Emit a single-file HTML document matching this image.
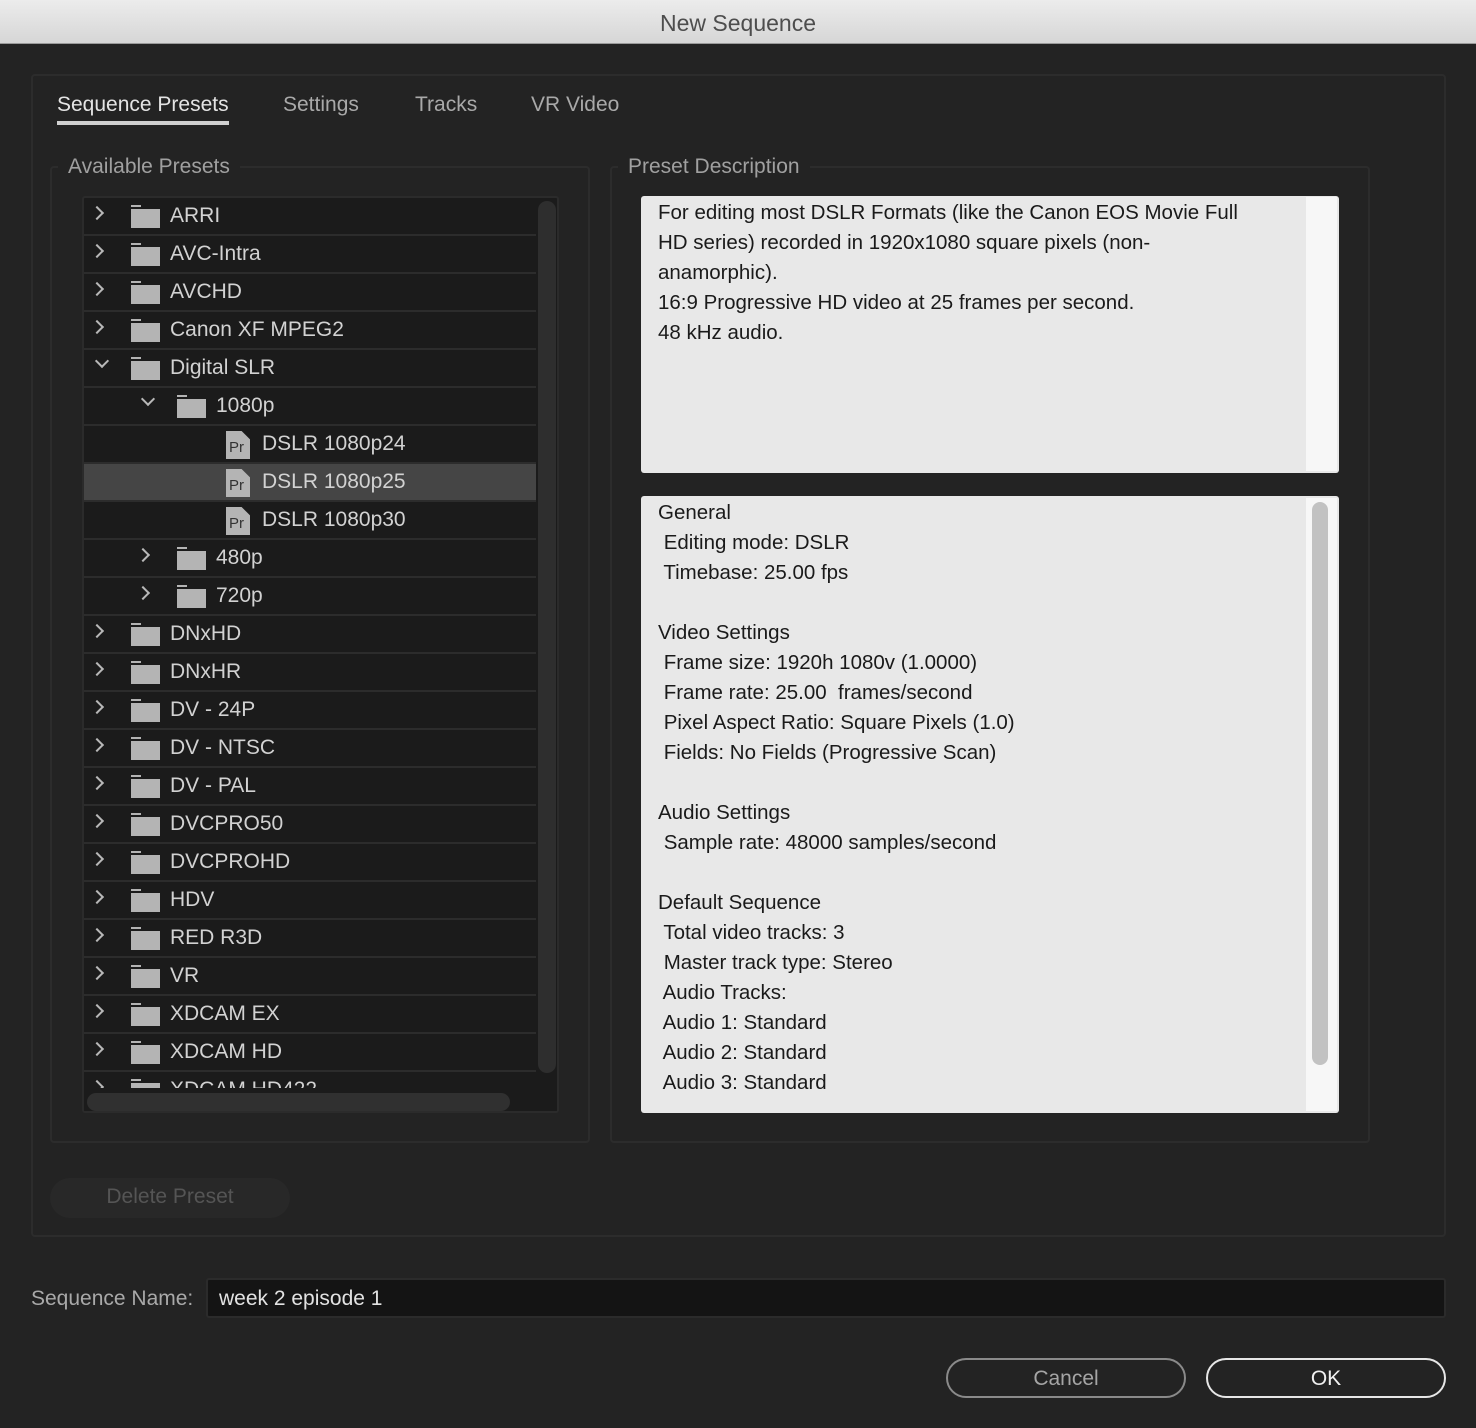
<!DOCTYPE html>
<html><head><meta charset="utf-8"><style>
*{margin:0;padding:0;box-sizing:border-box}
body{width:1476px;height:1428px;background:#232323;font-family:"Liberation Sans",sans-serif;position:relative;overflow:hidden;color:#c8c8c8}
.abs{position:absolute}
#title{left:0;top:0;width:1476px;height:44px;background:linear-gradient(#ececec,#d6d6d6);border-bottom:1px solid #9a9a9a;text-align:center;font-size:23px;line-height:46px;color:#4d4d4d}
.box{border:2px solid #2c2c2c;border-radius:4px}
.tab{top:93px;font-size:21px;color:#a9a9a9}
.legend{font-size:21px;color:#a0a0a0;background:#232323;padding:0 10px}
#tree{left:82px;top:196px;width:477px;height:917px;background:#1b1b1b;border:2px solid #2b2b2b;border-radius:3px;overflow:hidden}
.row{position:absolute;left:-2px;width:454px;height:38px;border-bottom:2px solid #2c2c2c;font-size:21px;color:#d2d2d2;line-height:35px}
.row.sel{background:#454545}
.chev{position:absolute;top:10px;width:10px;height:10px;border-right:2px solid #b8b8b8;border-bottom:2px solid #b8b8b8}
.fold{position:absolute;top:11px;width:29px;height:19px;background:#b4b4b4}
.fold:before{content:"";position:absolute;left:0;top:-4px;width:10px;height:2px;background:#b4b4b4}
.pr{position:absolute;top:5px;width:24px;height:28px;background:#b4b4b4;clip-path:polygon(0 0,65% 0,100% 30%,100% 100%,0 100%);font-style:normal}
.pr span{position:absolute;left:3px;top:8px;font-size:15px;line-height:18px;color:#333}
.txt{position:absolute;top:0}
.desc{background:#e8e8e8;border-radius:3px;color:#1a1a1a;font-size:20.5px;line-height:30px;padding:2px 17px}
.btn{border-radius:20px;text-align:center;font-size:21px;line-height:37px}
</style></head><body>
<div id="title" class="abs">New Sequence</div>
<div class="abs box" style="left:31px;top:74px;width:1415px;height:1163px"></div>
<div class="abs tab" style="left:57px;color:#e4e4e4">Sequence Presets</div>
<div class="abs" style="left:57px;top:121px;width:172px;height:4px;background:#d0d0d0"></div>
<div class="abs tab" style="left:283px">Settings</div>
<div class="abs tab" style="left:415px">Tracks</div>
<div class="abs tab" style="left:531px">VR Video</div>

<div class="abs box" style="left:50px;top:166px;width:540px;height:977px"></div>
<div class="abs legend" style="left:58px;top:155px">Available Presets</div>
<div class="abs box" style="left:610px;top:166px;width:760px;height:977px"></div>
<div class="abs legend" style="left:618px;top:155px">Preset Description</div>

<div id="tree" class="abs">
<div class="row" style="top:0"><i class="chev" style="left:10px;transform:rotate(-45deg)"></i><i class="fold" style="left:49px"></i><span class="txt" style="left:88px">ARRI</span></div>
<div class="row" style="top:38px"><i class="chev" style="left:10px;transform:rotate(-45deg)"></i><i class="fold" style="left:49px"></i><span class="txt" style="left:88px">AVC-Intra</span></div>
<div class="row" style="top:76px"><i class="chev" style="left:10px;transform:rotate(-45deg)"></i><i class="fold" style="left:49px"></i><span class="txt" style="left:88px">AVCHD</span></div>
<div class="row" style="top:114px"><i class="chev" style="left:10px;transform:rotate(-45deg)"></i><i class="fold" style="left:49px"></i><span class="txt" style="left:88px">Canon XF MPEG2</span></div>
<div class="row" style="top:152px"><i class="chev" style="left:15px;top:6px;transform:rotate(45deg)"></i><i class="fold" style="left:49px"></i><span class="txt" style="left:88px">Digital SLR</span></div>
<div class="row" style="top:190px"><i class="chev" style="left:61px;top:6px;transform:rotate(45deg)"></i><i class="fold" style="left:95px"></i><span class="txt" style="left:134px">1080p</span></div>
<div class="row" style="top:228px"><i class="pr" style="left:144px"><span>Pr</span></i><span class="txt" style="left:180px">DSLR 1080p24</span></div>
<div class="row sel" style="top:266px"><i class="pr" style="left:144px"><span>Pr</span></i><span class="txt" style="left:180px">DSLR 1080p25</span></div>
<div class="row" style="top:304px"><i class="pr" style="left:144px"><span>Pr</span></i><span class="txt" style="left:180px">DSLR 1080p30</span></div>
<div class="row" style="top:342px"><i class="chev" style="left:56px;transform:rotate(-45deg)"></i><i class="fold" style="left:95px"></i><span class="txt" style="left:134px">480p</span></div>
<div class="row" style="top:380px"><i class="chev" style="left:56px;transform:rotate(-45deg)"></i><i class="fold" style="left:95px"></i><span class="txt" style="left:134px">720p</span></div>
<div class="row" style="top:418px"><i class="chev" style="left:10px;transform:rotate(-45deg)"></i><i class="fold" style="left:49px"></i><span class="txt" style="left:88px">DNxHD</span></div>
<div class="row" style="top:456px"><i class="chev" style="left:10px;transform:rotate(-45deg)"></i><i class="fold" style="left:49px"></i><span class="txt" style="left:88px">DNxHR</span></div>
<div class="row" style="top:494px"><i class="chev" style="left:10px;transform:rotate(-45deg)"></i><i class="fold" style="left:49px"></i><span class="txt" style="left:88px">DV - 24P</span></div>
<div class="row" style="top:532px"><i class="chev" style="left:10px;transform:rotate(-45deg)"></i><i class="fold" style="left:49px"></i><span class="txt" style="left:88px">DV - NTSC</span></div>
<div class="row" style="top:570px"><i class="chev" style="left:10px;transform:rotate(-45deg)"></i><i class="fold" style="left:49px"></i><span class="txt" style="left:88px">DV - PAL</span></div>
<div class="row" style="top:608px"><i class="chev" style="left:10px;transform:rotate(-45deg)"></i><i class="fold" style="left:49px"></i><span class="txt" style="left:88px">DVCPRO50</span></div>
<div class="row" style="top:646px"><i class="chev" style="left:10px;transform:rotate(-45deg)"></i><i class="fold" style="left:49px"></i><span class="txt" style="left:88px">DVCPROHD</span></div>
<div class="row" style="top:684px"><i class="chev" style="left:10px;transform:rotate(-45deg)"></i><i class="fold" style="left:49px"></i><span class="txt" style="left:88px">HDV</span></div>
<div class="row" style="top:722px"><i class="chev" style="left:10px;transform:rotate(-45deg)"></i><i class="fold" style="left:49px"></i><span class="txt" style="left:88px">RED R3D</span></div>
<div class="row" style="top:760px"><i class="chev" style="left:10px;transform:rotate(-45deg)"></i><i class="fold" style="left:49px"></i><span class="txt" style="left:88px">VR</span></div>
<div class="row" style="top:798px"><i class="chev" style="left:10px;transform:rotate(-45deg)"></i><i class="fold" style="left:49px"></i><span class="txt" style="left:88px">XDCAM EX</span></div>
<div class="row" style="top:836px"><i class="chev" style="left:10px;transform:rotate(-45deg)"></i><i class="fold" style="left:49px"></i><span class="txt" style="left:88px">XDCAM HD</span></div>
<div class="row" style="top:874px"><i class="chev" style="left:10px;transform:rotate(-45deg)"></i><i class="fold" style="left:49px"></i><span class="txt" style="left:88px">XDCAM HD422</span></div>
<div class="abs" style="left:0;top:890px;width:475px;height:30px;background:#1b1b1b"></div>
<div class="abs" style="left:3px;top:895px;width:423px;height:18px;border-radius:9px;background:#303030"></div>
<div class="abs" style="left:454px;top:3px;width:18px;height:872px;border-radius:9px;background:#2e2e2e"></div>
</div>

<div class="abs desc" style="left:641px;top:196px;width:698px;height:277px">For editing most DSLR Formats (like the Canon EOS Movie Full<br>HD series) recorded in 1920x1080 square pixels (non-<br>anamorphic).<br>16:9 Progressive HD video at 25 frames per second.<br>48 kHz audio.</div>
<div class="abs" style="left:1306px;top:197px;width:31px;height:274px;background:#f7f7f7"></div>
<div class="abs desc" style="left:641px;top:496px;width:698px;height:617px;white-space:pre">General
 Editing mode: DSLR
 Timebase: 25.00 fps

Video Settings
 Frame size: 1920h 1080v (1.0000)
 Frame rate: 25.00  frames/second
 Pixel Aspect Ratio: Square Pixels (1.0)
 Fields: No Fields (Progressive Scan)

Audio Settings
 Sample rate: 48000 samples/second

Default Sequence
 Total video tracks: 3
 Master track type: Stereo
 Audio Tracks:
 Audio 1: Standard
 Audio 2: Standard
 Audio 3: Standard</div>
<div class="abs" style="left:1306px;top:498px;width:31px;height:613px;background:#f7f7f7"></div>
<div class="abs" style="left:1312px;top:502px;width:16px;height:563px;border-radius:8px;background:#c2c2c2"></div>

<div class="abs btn" style="left:50px;top:1178px;width:240px;height:40px;background:#282828;color:#555">Delete Preset</div>

<div class="abs" style="left:31px;top:1287px;font-size:21px;color:#a9a9a9">Sequence Name:</div>
<div class="abs" style="left:206px;top:1278px;width:1240px;height:40px;background:#141414;border:2px solid #2b2b2b;border-radius:3px;font-size:21px;color:#e2e2e2;line-height:37px;padding-left:11px">week 2 episode 1</div>

<div class="abs btn" style="left:946px;top:1358px;width:240px;height:40px;border:2px solid #8a8a8a;color:#a5a5a5">Cancel</div>
<div class="abs btn" style="left:1206px;top:1358px;width:240px;height:40px;border:2px solid #e6e6e6;color:#f0f0f0">OK</div>
</body></html>
